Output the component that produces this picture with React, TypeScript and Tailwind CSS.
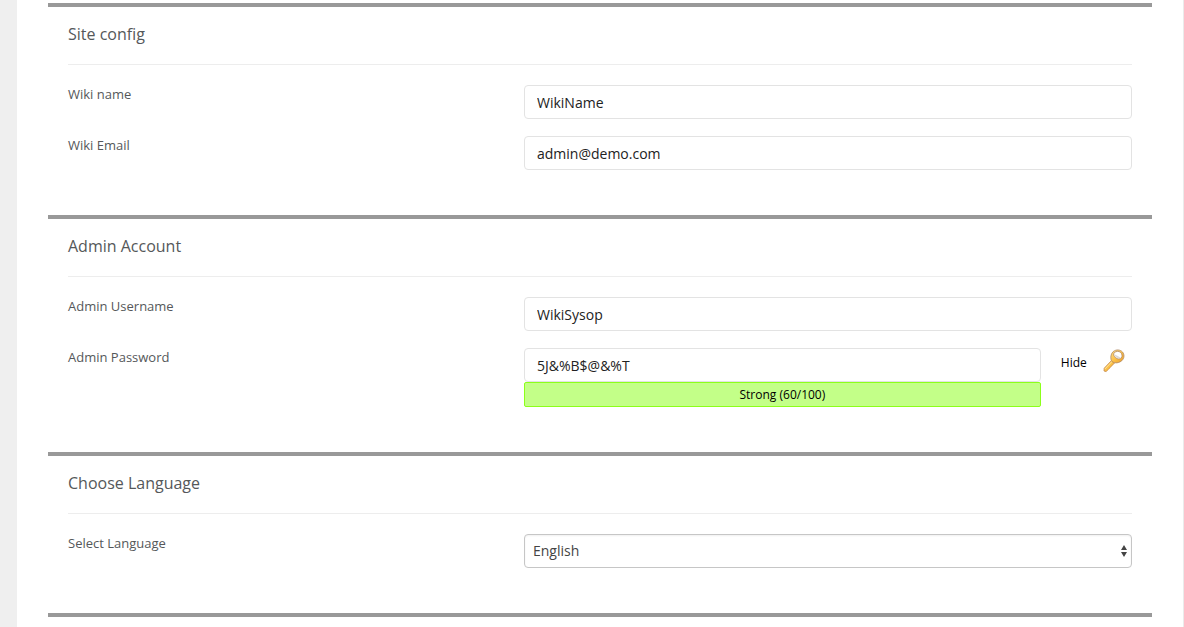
import { useState, type InputHTMLAttributes, type ReactNode } from "react";

function Section({ title, children }: { title: string; children: ReactNode }) {
  return (
    <section className="border-t-4 border-[#999] px-5 pb-[45px]">
      <h2 className="border-b border-[#ededed] pt-4 pb-[19px] text-base leading-[22px] text-[#55585a]">{title}</h2>
      <div className="flex flex-col gap-[17px] pt-5">{children}</div>
    </section>
  );
}

function Row({ id, label, children }: { id: string; label: string; children: ReactNode }) {
  return (
    <div className="grid grid-cols-[3fr_4fr] items-start">
      <label htmlFor={id} className="text-[13px] leading-[18px] text-[#55585a]">
        {label}
      </label>
      {children}
    </div>
  );
}

function TextInput(props: InputHTMLAttributes<HTMLInputElement>) {
  return (
    <input
      {...props}
      className="block h-[34px] w-full min-w-0 rounded-sm border border-[#e3e3e3] bg-white px-3 text-sm text-[#222] outline-none"
    />
  );
}

function KeyIcon() {
  return (
    <svg viewBox="0 0 22 24" className="h-6 w-[22px]" fill="none" aria-hidden="true">
      <defs>
        <linearGradient id="key-gold" x1="0" y1="0" x2="1" y2="1">
          <stop offset="0" stopColor="#ffe08a" />
          <stop offset="0.55" stopColor="#fbbf45" />
          <stop offset="1" stopColor="#e89a2c" />
        </linearGradient>
      </defs>
      <path
        d="M8.8 11.2 L1.2 19.2 L1 22 L3.2 22.6 L4.4 21.2 L5.2 20.6 L6.4 19.4 L7.2 18.4 L11.6 13.9 Z"
        fill="url(#key-gold)"
        stroke="#c58a4e"
        strokeWidth="0.8"
        strokeLinejoin="round"
      />
      <path d="M9.4 12.2 L2 20" stroke="#ffe6a0" strokeWidth="0.8" />
      <path
        fillRule="evenodd"
        d="M10.2 2.6 C13 0.2 17.4 0.5 19.5 3 C21.7 5.6 21.4 9.4 18.8 11.7 C16.8 13.4 13.8 14.4 11.4 13.6 C9.5 13.3 8.2 12 8 10.4 C7.4 7.6 8.2 4.3 10.2 2.6 Z M11.4 3.6 C9.9 5.2 10.6 7 12.6 8.7 C14.6 10.3 17 10.4 18.3 8.9 C19.6 7.2 19.1 4.8 17.6 3.4 C15.8 2 13.2 2 11.4 3.6 Z"
        fill="url(#key-gold)"
        stroke="#b08862"
        strokeWidth="0.8"
      />
      <path d="M11 5.2 C13.2 6 16.6 7.6 18 9 C16.4 10.2 11.2 8 11 5.2 Z" fill="#ddd8d4" />
    </svg>
  );
}

export default function App() {
  const [hidden, setHidden] = useState(false);

  return (
    <div className="min-h-screen bg-[#efefef] pl-[17px] font-['Open_Sans',sans-serif]">
      <main className="min-h-screen border-r border-[#ebebeb] bg-white pt-[3px] pr-[31px] pl-[31px]">
        <form onSubmit={(e) => e.preventDefault()}>
          <Section title="Site config">
            <Row id="wiki-name" label="Wiki name">
              <TextInput id="wiki-name" type="text" defaultValue="WikiName" />
            </Row>
            <Row id="wiki-email" label="Wiki Email">
              <TextInput id="wiki-email" type="email" defaultValue="admin@demo.com" />
            </Row>
          </Section>

          <Section title="Admin Account">
            <Row id="admin-user" label="Admin Username">
              <TextInput id="admin-user" type="text" defaultValue="WikiSysop" />
            </Row>
            <Row id="admin-pass" label="Admin Password">
              <div className="flex items-start">
                <div className="w-[85%]">
                  <TextInput id="admin-pass" type={hidden ? "password" : "text"} defaultValue="5J&%B$@&%T" />
                  <div className="h-[25px] rounded-xs border border-[#8cff1a] bg-[#c3ff88] text-center text-xs leading-6 text-black">
                    Strong (60/100)
                  </div>
                </div>
                <div className="flex flex-1 items-start justify-between pr-[7px] pl-5">
                  <button type="button" className="pt-[5px] text-xs leading-5 text-black" onClick={() => setHidden(!hidden)}>
                    {hidden ? "Show" : "Hide"}
                  </button>
                  <button type="button" aria-label="Generate password" className="pt-px">
                    <KeyIcon />
                  </button>
                </div>
              </div>
            </Row>
          </Section>

          <Section title="Choose Language">
            <Row id="language" label="Select Language">
              <div className="relative">
                <select
                  id="language"
                  className="block h-[34px] w-full appearance-none rounded-sm border border-[#c6c6c6] bg-white px-2 text-sm text-[#444] shadow-[inset_0_1px_2px_#f0f0f0] outline-none"
                >
                  <option>English</option>
                </select>
                <svg viewBox="0 0 6 12" className="pointer-events-none absolute top-[11px] right-[5px] h-3 w-1.5" fill="#444" aria-hidden="true">
                  <path d="M3 0 L6 5 H0 Z M0 7 H6 L3 12 Z" />
                </svg>
              </div>
            </Row>
          </Section>
          <hr className="border-t-4 border-[#999]" />
        </form>
      </main>
    </div>
  );
}
